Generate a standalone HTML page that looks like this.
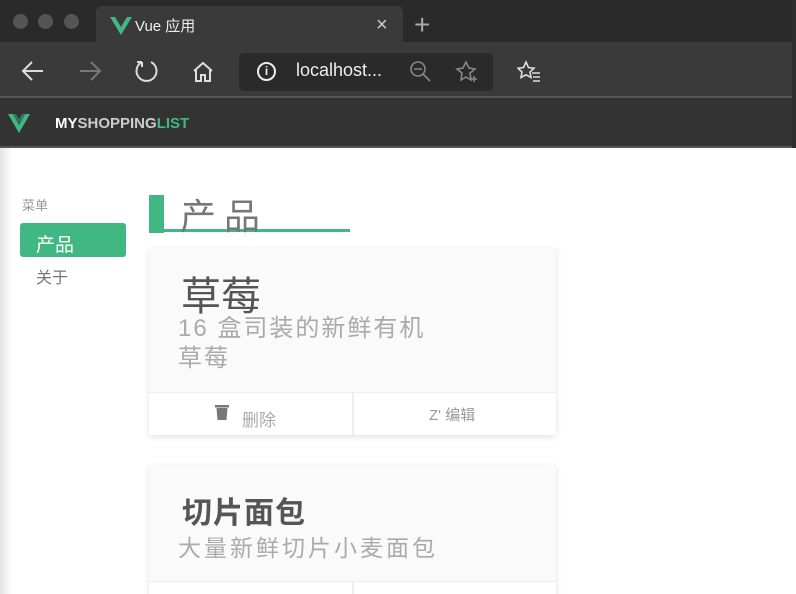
<!DOCTYPE html>
<html><head><meta charset="utf-8"><style>
*{margin:0;padding:0;box-sizing:border-box}
html,body{width:796px;height:594px;overflow:hidden}
body{background:#fff;font-family:"Liberation Sans","Noto Sans CJK SC",sans-serif;position:relative}
.abs{position:absolute}
</style></head><body>
<div class="abs" style="left:0;top:0;width:796px;height:42px;background:#2a2a2a"></div>
<div class="abs" style="left:13px;top:14px;width:15px;height:15px;border-radius:50%;background:#555"></div>
<div class="abs" style="left:38px;top:14px;width:15px;height:15px;border-radius:50%;background:#555"></div>
<div class="abs" style="left:64px;top:14px;width:15px;height:15px;border-radius:50%;background:#555"></div>
<div class="abs" style="left:96px;top:6px;width:307px;height:40px;background:#3a3a3a;border-radius:5px 5px 0 0"></div>
<svg class="abs" style="left:110px;top:17px" width="22" height="18" viewBox="0 0 22 18"><path d="M0 0h5l6 10 6-10h5L11 18z" fill="#41b883"/></svg>
<div class="abs" style="left:135px;top:15px;color:#eee;font-size:15px">Vue 应用</div>
<div class="abs" style="left:376px;top:14px;color:#ccc;font-size:20px">×</div>
<div class="abs" style="left:414px;top:9px;color:#aaa;font-size:28px;font-weight:300">+</div>
<div class="abs" style="left:0;top:42px;width:796px;height:54px;background:#3a3a3a"></div>
<svg class="abs" style="left:20px;top:58px" width="26" height="26" viewBox="0 0 26 26" fill="none" stroke="#ddd" stroke-width="2"><path d="M23 13H3M12 4l-9 9 9 9"/></svg>
<svg class="abs" style="left:77px;top:58px" width="26" height="26" viewBox="0 0 26 26" fill="none" stroke="#777" stroke-width="2"><path d="M3 13h20M14 4l9 9-9 9"/></svg>
<svg class="abs" style="left:134px;top:58px" width="26" height="26" viewBox="0 0 26 26" fill="none" stroke="#ddd" stroke-width="2"><path d="M8 4A10 10 0 1 0 17 4M8 4V9M8 4H3"/></svg>
<svg class="abs" style="left:191px;top:60px" width="24" height="24" viewBox="0 0 24 24" fill="none" stroke="#ddd" stroke-width="2"><path d="M3 11L12 3l9 8M5 10v11h5v-6h4v6h5V10"/></svg>
<div class="abs" style="left:239px;top:53px;width:254px;height:38px;background:#2a2a2a;border-radius:5px"></div>
<div class="abs" style="left:257px;top:62px;width:19px;height:19px;border:2px solid #eee;border-radius:50%;color:#eee;font-size:12px;text-align:center;line-height:15px;font-weight:bold">i</div>
<div class="abs" style="left:296px;top:60px;color:#eee;font-size:18px">localhost...</div>
<svg class="abs" style="left:408px;top:59px" width="26" height="26" viewBox="0 0 26 26" fill="none" stroke="#888" stroke-width="1.6"><circle cx="10" cy="10" r="7"/><path d="M6 10h8M15 15l7 7"/></svg>
<svg class="abs" style="left:455px;top:60px" width="24" height="24" viewBox="0 0 24 24" fill="none" stroke="#888" stroke-width="1.6"><path d="M11 2l3 6 6 1-5 4 1 7-5-3-5 3 1-7-5-4 6-1z"/><path d="M19 16v6M16 19h6"/></svg>
<svg class="abs" style="left:517px;top:60px" width="26" height="24" viewBox="0 0 26 24" fill="none" stroke="#ddd" stroke-width="1.6"><path d="M9 2l2.5 5.5 5.5.7-4 3.8 1 5.5-5-2.7-5 2.7 1-5.5-4-3.8 5.5-.7z"/><path d="M15 13h8M16 17h7M16 21h7"/></svg>
<div class="abs" style="left:0;top:96px;width:796px;height:2px;background:#555"></div>
<div class="abs" style="left:0;top:98px;width:796px;height:48px;background:#333"></div>
<div class="abs" style="left:0;top:146px;width:796px;height:2px;background:#555"></div>
<svg class="abs" style="left:8px;top:114px" width="22" height="19" viewBox="0 0 22 19"><path d="M0 0h5l6 11 6-11h5L11 19z" fill="#41b883"/><path d="M5 0h3l3 5 3-5h3l-6 10z" fill="#2f7a5a"/></svg>
<div class="abs" style="left:55px;top:115px;font-size:15px;font-weight:bold"><span style="color:#fff">MY</span><span style="color:#ccc">SHOPPING</span><span style="color:#41b883">LIST</span></div>
<div class="abs" style="left:0;top:148px;width:12px;height:446px;background:linear-gradient(90deg,#e4e4e4,#fff)"></div>
<div class="abs" style="left:792px;top:0;width:4px;height:148px;background:#2e2e2e"></div>
<div class="abs" style="left:22px;top:195px;color:#999;font-size:13px">菜单</div>
<div class="abs" style="left:20px;top:223px;width:106px;height:34px;background:#41b883;border-radius:3px"></div>
<div class="abs" style="left:36px;top:230px;color:#fff;font-size:19px">产品</div>
<div class="abs" style="left:36px;top:264px;color:#777;font-size:16px">关于</div>
<div class="abs" style="left:149px;top:195px;width:15px;height:38px;background:#41b883"></div>
<div class="abs" style="left:149px;top:229px;width:201px;height:3px;background:#41b883"></div>
<div class="abs" style="left:180px;top:195px;color:#777;font-size:36px;line-height:44px;letter-spacing:8px">产品</div>
<div class="abs" style="left:149px;top:248px;width:407px;height:187px;background:#fafafa;box-shadow:0 2px 6px rgba(0,0,0,.12)"></div>
<div class="abs" style="left:181px;top:273px;color:#555;font-size:40px;line-height:48px">草莓</div>
<div class="abs" style="left:178px;top:314px;color:#aaa;font-size:24px;line-height:30px;white-space:nowrap;letter-spacing:2px">16 盒司装的新鲜有机<br>草莓</div>
<div class="abs" style="left:149px;top:392px;width:407px;height:43px;background:#fff;border-top:1px solid #eee"></div>
<div class="abs" style="left:352px;top:392px;width:2px;height:43px;background:#eee"></div>
<svg class="abs" style="left:215px;top:404px" width="14" height="16" viewBox="0 0 14 16"><rect x="0" y="1" width="14" height="2.5" fill="#777"/><path d="M1.5 4h11l-1 12h-9z" fill="#777"/></svg>
<div class="abs" style="left:242px;top:406px;color:#aaa;font-size:17px">删除</div>
<div class="abs" style="left:429px;top:404px;color:#999;font-size:15px">Z' 编辑</div>
<div class="abs" style="left:149px;top:465px;width:407px;height:140px;background:#fafafa;box-shadow:0 2px 6px rgba(0,0,0,.12)"></div>
<div class="abs" style="left:182px;top:494px;color:#555;font-size:30px;line-height:40px;font-weight:bold;letter-spacing:1px">切片面包</div>
<div class="abs" style="left:178px;top:533px;color:#aaa;font-size:23px;line-height:31px;letter-spacing:3px">大量新鲜切片小麦面包</div>
<div class="abs" style="left:149px;top:581px;width:407px;height:13px;background:#fff;border-top:1px solid #eee"></div>
<div class="abs" style="left:352px;top:581px;width:2px;height:13px;background:#eee"></div>
</body></html>
